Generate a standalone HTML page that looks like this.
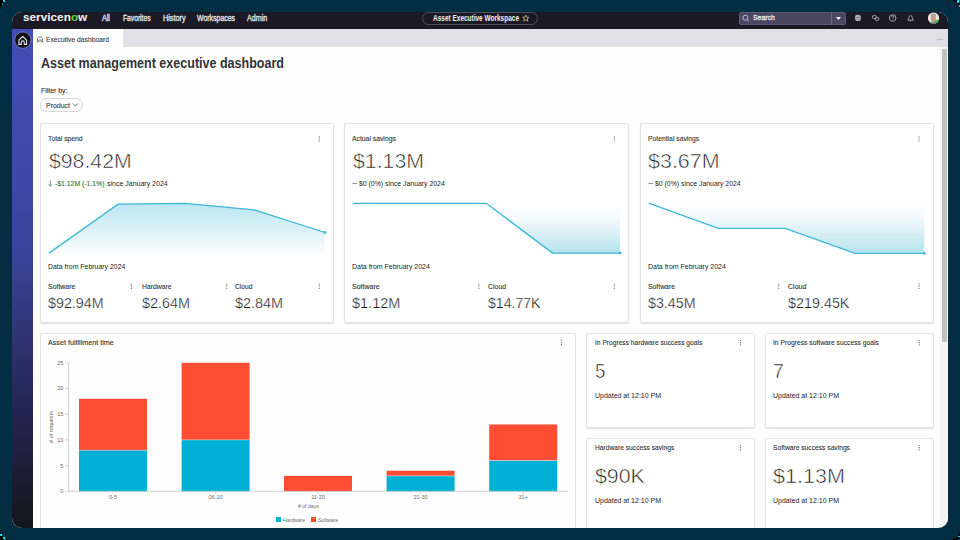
<!DOCTYPE html>
<html><head><meta charset="utf-8"><style>
html,body{margin:0;padding:0;}
body{width:960px;height:540px;overflow:hidden;background:#000;position:relative;font-family:"Liberation Sans", sans-serif;}
#bg{position:absolute;left:0;top:0;width:960px;height:540px;background:#032d43;border-radius:10px;}
.px{position:absolute;width:1.5px;height:1.5px;background:#00e5e5;}
.t{position:absolute;white-space:nowrap;line-height:1;transform-origin:0 0;}
</style></head><body>
<div id="bg"></div>
<div class="px" style="left:3px;top:0"></div><div class="px" style="left:1.5px;top:3px;background:#0a8a88"></div>
<div class="px" style="left:0;top:534px;width:2px"></div><div class="px" style="left:3px;top:537px"></div><div class="px" style="left:4px;top:539px;background:#0a9a98"></div>
<div class="px" style="left:957px;top:0;height:2.5px"></div><div class="px" style="left:958.5px;top:0;background:#1020e0"></div><div class="px" style="left:958.5px;top:5px"></div>
<div class="px" style="left:958px;top:536px;width:2px;height:1px"></div><div class="px" style="left:959px;top:539px;background:#1020e0"></div>
<div style="position:absolute;left:12px;top:12px;width:936px;height:516px;border-radius:10px;overflow:hidden;background:#fefefe;"><div style="position:absolute;left:-12px;top:-12px;width:960px;height:540px;">
<div style="position:absolute;left:12px;top:12px;width:936px;height:17px;background:#1a1924;"></div>
<div style="position:absolute;left:12px;top:29px;width:21px;height:499px;background:linear-gradient(to bottom,#444db5 0%,#424bb0 11.2%,#3b449a 44.3%,#303577 60.3%,#242756 74.3%,#1d1f3c 86.4%,#151821 96.4%,#141720 100%);"></div>
<div style="position:absolute;left:123px;top:29px;width:825px;height:18px;background:#e1e0e6;"></div>
<div style="position:absolute;left:940px;top:47px;width:8px;height:481px;background:#f4f4f4;"></div>
<div style="position:absolute;left:942.4px;top:49px;width:4.2px;height:293px;background:#bec3c1;border-radius:1px;"></div>
<div class="t" style="left:22.90px;top:12px;font-size:11px;color:#f4f4f4;font-weight:700;transform:scaleX(1.0726);">servicen<span style="color:#5fd34a">o</span>w</div>
<div class="t" style="left:102.10px;top:14px;font-size:8.5px;color:#ececf0;font-weight:400;-webkit-text-stroke:0.3px #ececf0;transform:scaleX(0.8373);">All</div>
<div class="t" style="left:122.80px;top:14px;font-size:8.5px;color:#ececf0;font-weight:400;-webkit-text-stroke:0.3px #ececf0;transform:scaleX(0.7872);">Favorites</div>
<div class="t" style="left:162.50px;top:14px;font-size:8.5px;color:#ececf0;font-weight:400;-webkit-text-stroke:0.3px #ececf0;transform:scaleX(0.8511);">History</div>
<div class="t" style="left:197.20px;top:14px;font-size:8.5px;color:#ececf0;font-weight:400;-webkit-text-stroke:0.3px #ececf0;transform:scaleX(0.8172);">Workspaces</div>
<div class="t" style="left:247.00px;top:14px;font-size:8.5px;color:#ececf0;font-weight:400;-webkit-text-stroke:0.3px #ececf0;transform:scaleX(0.8383);">Admin</div>
<div style="position:absolute;left:422px;top:12.2px;width:116px;height:12.6px;border:1px solid #4f4d58;border-radius:7px;box-sizing:border-box;"></div>
<div class="t" style="left:433.00px;top:14px;font-size:8.5px;color:#f4f4f6;font-weight:700;transform:scaleX(0.7627);">Asset Executive Workspace</div>
<div style="position:absolute;left:739px;top:12.2px;width:107px;height:12.5px;background:#4a4560;border:1px solid #5e5a72;border-radius:2px;box-sizing:border-box;"></div>
<div style="position:absolute;left:831px;top:12.2px;width:1px;height:12.5px;background:#6a6680;"></div>
<div class="t" style="left:753.20px;top:14px;font-size:7.2px;color:#ece9f2;font-weight:400;-webkit-text-stroke:0.3px #ece9f2;transform:scaleX(0.9551);">Search</div>
<svg style="position:absolute;left:0;top:0" width="960" height="540" viewBox="0 0 960 540"><circle cx="745.4" cy="17.7" r="2.5" fill="none" stroke="#cfcbe0" stroke-width="0.9"/><line x1="747.2" y1="19.6" x2="749" y2="21.4" stroke="#cfcbe0" stroke-width="0.9"/><polygon points="836,17 841,17 838.5,20" fill="#ffffff"/><polygon points="525.80,15.10 526.68,17.19 528.94,17.38 527.23,18.86 527.74,21.07 525.80,19.90 523.86,21.07 524.37,18.86 522.66,17.38 524.92,17.19" fill="none" stroke="#c9b37a" stroke-width="0.9" stroke-linejoin="round"/><circle cx="857.9" cy="17.9" r="3.1" fill="#bdbac6"/><line x1="854.8" y1="17.9" x2="861" y2="17.9" stroke="#55525e" stroke-width="0.7"/><line x1="855.3" y1="16.3" x2="860.5" y2="16.3" stroke="#8a8794" stroke-width="0.5"/><line x1="855.3" y1="19.5" x2="860.5" y2="19.5" stroke="#8a8794" stroke-width="0.5"/><ellipse cx="874.4" cy="17" rx="2.1" ry="1.6" fill="none" stroke="#bdbac6" stroke-width="0.8"/><ellipse cx="877" cy="19" rx="2" ry="1.5" fill="none" stroke="#bdbac6" stroke-width="0.8"/><circle cx="892.7" cy="18" r="3.3" fill="none" stroke="#bdbac6" stroke-width="0.85"/><path d="M891.6 16.6 Q892.7 15.4 893.7 16.4 Q894.3 17.3 893 18.3 L892.9 19" fill="none" stroke="#bdbac6" stroke-width="0.8"/><path d="M907.7 20.2 Q908.9 19.4 908.9 17.6 Q908.9 15.6 910.6 15.6 Q912.3 15.6 912.3 17.6 Q912.3 19.4 913.5 20.2 Z" fill="none" stroke="#bdbac6" stroke-width="0.8" stroke-linejoin="round"/><path d="M909.9 20.6 Q910.6 21.6 911.3 20.6" fill="none" stroke="#bdbac6" stroke-width="0.7"/><circle cx="933.5" cy="18" r="5.6" fill="#ece8e6"/><ellipse cx="933.4" cy="18.6" rx="2.6" ry="3.4" fill="#c89a86"/><path d="M930.6 16.4 Q933.4 13.2 936.2 16.4 L936 15 Q933.4 12.6 930.8 15 Z" fill="#8a7a6e"/><path d="M929.5 22.5 Q933.4 20.8 937.3 22.5 L936 23.4 L931 23.4 Z" fill="#7a8a98"/><circle cx="936.6" cy="21.3" r="1.7" fill="#47b84a"/><circle cx="22.8" cy="40.1" r="8.2" fill="#111116" stroke="#7d7ac8" stroke-width="0.9"/><path d="M18.9 44.4 L18.9 40.1 L22.75 36.5 L26.6 40.1 L26.6 44.4 L24.3 44.4 L24.3 42.4 Q24.3 40.9 22.75 40.9 Q21.2 40.9 21.2 42.4 L21.2 44.4 Z" fill="none" stroke="#e2e2ea" stroke-width="1.1" stroke-linejoin="round"/><path d="M37.4 42 L37.4 38.7 L40 36.3 L42.6 38.7 L42.6 42 L41.2 42 L41.2 40.8 Q41.2 39.8 40 39.8 Q38.8 39.8 38.8 40.8 L38.8 42 Z" fill="none" stroke="#6a6a6a" stroke-width="0.9" stroke-linejoin="round"/><circle cx="937.9" cy="39.2" r="0.55" fill="#888"/><circle cx="940.1" cy="39.2" r="0.55" fill="#888"/><circle cx="942.3" cy="39.2" r="0.55" fill="#888"/><polyline points="72.9,103.5 75.4,106.1 77.9,103.5" fill="none" stroke="#555" stroke-width="0.9"/></svg>
<div class="t" style="left:45.70px;top:36px;font-size:7px;color:#3a3a3a;font-weight:400;-webkit-text-stroke:0.1px #3a3a3a;transform:scaleX(0.9636);">Executive dashboard</div>
<div class="t" style="left:40.70px;top:56px;font-size:14px;color:#333335;font-weight:700;transform:scaleX(0.8949);">Asset management executive dashboard</div>
<div class="t" style="left:40.70px;top:87px;font-size:7.3px;color:#2b2b2e;font-weight:400;-webkit-text-stroke:0.1px #2b2b2e;transform:scaleX(0.9394);">Filter by:</div>
<div style="position:absolute;left:40.3px;top:97.6px;width:42.5px;height:14.1px;border:1px solid #d6d6d8;border-radius:8px;box-sizing:border-box;"></div>
<div class="t" style="left:45.80px;top:102px;font-size:7.6px;color:#333;font-weight:400;-webkit-text-stroke:0.1px #333;transform:scaleX(0.9167);">Product</div>
<div style="position:absolute;left:40px;top:123px;width:294px;height:200px;background:#fff;border:1px solid #e3e3e3;box-shadow:0 1px 1.5px rgba(0,0,0,.12);box-sizing:border-box;border-radius:2px;"></div>
<div style="position:absolute;left:344px;top:123px;width:285px;height:200px;background:#fff;border:1px solid #e3e3e3;box-shadow:0 1px 1.5px rgba(0,0,0,.12);box-sizing:border-box;border-radius:2px;"></div>
<div style="position:absolute;left:640px;top:123px;width:294px;height:200px;background:#fff;border:1px solid #e3e3e3;box-shadow:0 1px 1.5px rgba(0,0,0,.12);box-sizing:border-box;border-radius:2px;"></div>
<div class="t" style="left:48.00px;top:136px;font-size:6.6px;color:#333;font-weight:400;-webkit-text-stroke:0.1px #333;transform:scaleX(1.0249);">Total spend</div>
<div class="t" style="left:49.00px;top:150px;font-size:21px;color:#1c1c1c;font-weight:400;-webkit-text-stroke:0.55px #fff;transform:scaleX(1.0111);">$98.42M</div>
<div class="t" style="left:54.50px;top:181px;font-size:6.8px;color:#2f7a3a;font-weight:400;-webkit-text-stroke:0.1px #2f7a3a;transform:scaleX(1.0075);">-$1.12M (-1.1%)</div>
<div class="t" style="left:106.50px;top:181px;font-size:6.8px;color:#1c1c1c;font-weight:400;transform:scaleX(1.0290);">since January 2024</div>
<div class="t" style="left:47.80px;top:263px;font-size:7.6px;color:#1c1c1c;font-weight:400;transform:scaleX(0.9117);">Data from February 2024</div>
<div class="t" style="left:47.80px;top:284px;font-size:7.1px;color:#333;font-weight:400;-webkit-text-stroke:0.1px #333;transform:scaleX(0.9782);">Software</div>
<div class="t" style="left:47.80px;top:296px;font-size:14px;color:#1c1c1c;font-weight:400;-webkit-text-stroke:0.25px #fff;transform:scaleX(1.0209);">$92.94M</div>
<div class="t" style="left:142.30px;top:284px;font-size:7.1px;color:#333;font-weight:400;-webkit-text-stroke:0.1px #333;transform:scaleX(0.9585);">Hardware</div>
<div class="t" style="left:142.30px;top:296px;font-size:14px;color:#1c1c1c;font-weight:400;-webkit-text-stroke:0.25px #fff;transform:scaleX(1.0281);">$2.64M</div>
<div class="t" style="left:235.30px;top:284px;font-size:7.1px;color:#333;font-weight:400;-webkit-text-stroke:0.1px #333;transform:scaleX(0.9426);">Cloud</div>
<div class="t" style="left:235.30px;top:296px;font-size:14px;color:#1c1c1c;font-weight:400;-webkit-text-stroke:0.25px #fff;transform:scaleX(1.0302);">$2.84M</div>
<div class="t" style="left:351.70px;top:136px;font-size:6.6px;color:#333;font-weight:400;-webkit-text-stroke:0.1px #333;transform:scaleX(1.0312);">Actual savings</div>
<div class="t" style="left:352.80px;top:150px;font-size:21px;color:#1c1c1c;font-weight:400;-webkit-text-stroke:0.55px #fff;transform:scaleX(1.0124);">$1.13M</div>
<div class="t" style="left:358.50px;top:181px;font-size:6.8px;color:#1c1c1c;font-weight:400;transform:scaleX(1.0135);">$0 (0%) since January 2024</div>
<div class="t" style="left:352.00px;top:263px;font-size:7.6px;color:#1c1c1c;font-weight:400;transform:scaleX(0.9176);">Data from February 2024</div>
<div class="t" style="left:352.00px;top:284px;font-size:7.1px;color:#333;font-weight:400;-webkit-text-stroke:0.1px #333;transform:scaleX(0.9890);">Software</div>
<div class="t" style="left:352.00px;top:296px;font-size:14px;color:#1c1c1c;font-weight:400;-webkit-text-stroke:0.25px #fff;transform:scaleX(1.0345);">$1.12M</div>
<div class="t" style="left:487.90px;top:284px;font-size:7.1px;color:#333;font-weight:400;-webkit-text-stroke:0.1px #333;transform:scaleX(0.9749);">Cloud</div>
<div class="t" style="left:487.90px;top:296px;font-size:14px;color:#1c1c1c;font-weight:400;-webkit-text-stroke:0.25px #fff;transform:scaleX(1.0067);">$14.77K</div>
<div class="t" style="left:647.70px;top:136px;font-size:6.6px;color:#333;font-weight:400;-webkit-text-stroke:0.1px #333;transform:scaleX(1.0281);">Potential savings</div>
<div class="t" style="left:648.00px;top:150px;font-size:21px;color:#1c1c1c;font-weight:400;-webkit-text-stroke:0.55px #fff;transform:scaleX(1.0223);">$3.67M</div>
<div class="t" style="left:654.50px;top:181px;font-size:6.8px;color:#1c1c1c;font-weight:400;transform:scaleX(1.0123);">$0 (0%) since January 2024</div>
<div class="t" style="left:648.00px;top:263px;font-size:7.6px;color:#1c1c1c;font-weight:400;transform:scaleX(0.9176);">Data from February 2024</div>
<div class="t" style="left:648.00px;top:284px;font-size:7.1px;color:#333;font-weight:400;-webkit-text-stroke:0.1px #333;transform:scaleX(0.9640);">Software</div>
<div class="t" style="left:648.00px;top:296px;font-size:14px;color:#1c1c1c;font-weight:400;-webkit-text-stroke:0.25px #fff;transform:scaleX(1.0173);">$3.45M</div>
<div class="t" style="left:787.60px;top:284px;font-size:7.1px;color:#333;font-weight:400;-webkit-text-stroke:0.1px #333;transform:scaleX(0.9910);">Cloud</div>
<div class="t" style="left:787.60px;top:296px;font-size:14px;color:#1c1c1c;font-weight:400;-webkit-text-stroke:0.25px #fff;transform:scaleX(1.0247);">$219.45K</div>
<svg style="position:absolute;left:0;top:0" width="960" height="540" viewBox="0 0 960 540"><defs><linearGradient id="g1" x1="0" y1="0" x2="0" y2="1"><stop offset="0" stop-color="#bce6f1"/><stop offset="0.6" stop-color="#e0f3f8"/><stop offset="1" stop-color="#fdfeff"/></linearGradient><linearGradient id="g2" x1="0" y1="0" x2="0" y2="1"><stop offset="0" stop-color="#ffffff"/><stop offset="0.3" stop-color="#f1f9fc"/><stop offset="1" stop-color="#b6e2ee"/></linearGradient></defs><line x1="50.3" y1="180.6" x2="50.3" y2="186.2" stroke="#2f7a3a" stroke-width="0.7"/><polyline points="48.6,184.3 50.3,186.2 52,184.3" fill="none" stroke="#2f7a3a" stroke-width="0.7"/><line x1="352.3" y1="183.4" x2="357" y2="183.4" stroke="#555" stroke-width="0.7"/><line x1="648.3" y1="183.4" x2="653" y2="183.4" stroke="#555" stroke-width="0.7"/><polygon points="49,253.1 118.1,204.1 184.8,203.3 254.3,209.9 325,232.5 325,254 49,254" fill="url(#g1)"/><polyline points="49,253.1 118.1,204.1 184.8,203.3 254.3,209.9 325,232.5" fill="none" stroke="#3cb7d8" stroke-width="1.3"/><circle cx="325" cy="232.5" r="1.4" fill="#3cb7d8"/><polygon points="486.25,206 552.5,253.1 620.2,253.1 620.2,206" fill="url(#g2)"/><polyline points="353,203.3 486.25,203.3 552.5,253.1 620.2,253.1" fill="none" stroke="#3cb7d8" stroke-width="1.3"/><circle cx="620.2" cy="253.1" r="1.4" fill="#3cb7d8"/><polygon points="648.75,203.1 718.1,228.4 785.3,228.4 855,253.4 924.4,253.4 924.4,206 648.75,206" fill="url(#g2)"/><polyline points="648.75,203.1 718.1,228.4 785.3,228.4 855,253.4 924.4,253.4" fill="none" stroke="#3cb7d8" stroke-width="1.3"/><circle cx="924.4" cy="253.4" r="1.4" fill="#3cb7d8"/><rect x="79.0" y="450.18" width="68" height="41.12" fill="#01b0d5"/><rect x="79.0" y="398.78" width="68" height="51.40" fill="#ff4d33"/><rect x="79.0" y="449.78" width="68" height="0.8" fill="#dff0f2" opacity="0.6"/><rect x="181.6" y="439.90" width="68" height="51.40" fill="#01b0d5"/><rect x="181.6" y="362.80" width="68" height="77.10" fill="#ff4d33"/><rect x="181.6" y="439.50" width="68" height="0.8" fill="#dff0f2" opacity="0.6"/><rect x="284.0" y="475.88" width="68" height="15.42" fill="#ff4d33"/><rect x="386.6" y="475.88" width="68" height="15.42" fill="#01b0d5"/><rect x="386.6" y="470.74" width="68" height="5.14" fill="#ff4d33"/><rect x="386.6" y="475.48" width="68" height="0.8" fill="#dff0f2" opacity="0.6"/><rect x="489.2" y="460.46" width="68" height="30.84" fill="#01b0d5"/><rect x="489.2" y="424.48" width="68" height="35.98" fill="#ff4d33"/><rect x="489.2" y="460.06" width="68" height="0.8" fill="#dff0f2" opacity="0.6"/><line x1="68.4" y1="362.5" x2="68.4" y2="491.3" stroke="#c4c4c4" stroke-width="0.8"/><line x1="68.4" y1="491.3" x2="568" y2="491.3" stroke="#c4c4c4" stroke-width="0.8"/><line x1="65" y1="491.30" x2="68.4" y2="491.30" stroke="#c4c4c4" stroke-width="0.7"/><line x1="65" y1="465.60" x2="68.4" y2="465.60" stroke="#c4c4c4" stroke-width="0.7"/><line x1="65" y1="439.90" x2="68.4" y2="439.90" stroke="#c4c4c4" stroke-width="0.7"/><line x1="65" y1="414.20" x2="68.4" y2="414.20" stroke="#c4c4c4" stroke-width="0.7"/><line x1="65" y1="388.50" x2="68.4" y2="388.50" stroke="#c4c4c4" stroke-width="0.7"/><line x1="65" y1="362.80" x2="68.4" y2="362.80" stroke="#c4c4c4" stroke-width="0.7"/><line x1="113" y1="491.3" x2="113" y2="494.3" stroke="#c4c4c4" stroke-width="0.7"/><line x1="215.6" y1="491.3" x2="215.6" y2="494.3" stroke="#c4c4c4" stroke-width="0.7"/><line x1="318" y1="491.3" x2="318" y2="494.3" stroke="#c4c4c4" stroke-width="0.7"/><line x1="420.6" y1="491.3" x2="420.6" y2="494.3" stroke="#c4c4c4" stroke-width="0.7"/><line x1="523.2" y1="491.3" x2="523.2" y2="494.3" stroke="#c4c4c4" stroke-width="0.7"/></svg>
<div style="position:absolute;left:40px;top:333px;width:536px;height:220px;border:1px solid #e3e3e3;box-sizing:border-box;border-radius:2px;"></div>
<div class="t" style="left:47.70px;top:339px;font-size:7px;color:#333;font-weight:400;-webkit-text-stroke:0.1px #333;transform:scaleX(1.0251);">Asset fulfillment time</div>
<div class="t" style="left:43.3px;width:20px;text-align:right;top:489px;font-size:5.5px;color:#6a6a6a;">0</div>
<div class="t" style="left:43.3px;width:20px;text-align:right;top:464px;font-size:5.5px;color:#6a6a6a;">5</div>
<div class="t" style="left:43.3px;width:20px;text-align:right;top:438px;font-size:5.5px;color:#6a6a6a;">10</div>
<div class="t" style="left:43.3px;width:20px;text-align:right;top:412px;font-size:5.5px;color:#6a6a6a;">15</div>
<div class="t" style="left:43.3px;width:20px;text-align:right;top:386px;font-size:5.5px;color:#6a6a6a;">20</div>
<div class="t" style="left:43.3px;width:20px;text-align:right;top:361px;font-size:5.5px;color:#6a6a6a;">25</div>
<div class="t" style="left:93px;width:40px;text-align:center;top:495px;font-size:5.5px;color:#6a6a6a;">0-5</div>
<div class="t" style="left:195.6px;width:40px;text-align:center;top:495px;font-size:5.5px;color:#6a6a6a;">06-10</div>
<div class="t" style="left:298px;width:40px;text-align:center;top:495px;font-size:5.5px;color:#6a6a6a;">11-20</div>
<div class="t" style="left:400.6px;width:40px;text-align:center;top:495px;font-size:5.5px;color:#6a6a6a;">21-30</div>
<div class="t" style="left:503.20000000000005px;width:40px;text-align:center;top:495px;font-size:5.5px;color:#6a6a6a;">31+</div>
<div class="t" style="left:297.70px;top:504px;font-size:5.8px;color:#6a6a6a;font-weight:400;transform:scaleX(0.8833);"># of days</div>
<div class="t" style="left:32px;top:424px;width:40px;height:6px;text-align:center;font-size:5.5px;color:#6a6a6a;transform-origin:20px 3px;transform:rotate(-90deg);">&#35; of requests</div>
<div style="position:absolute;left:275.8px;top:516.8px;width:5px;height:5.7px;background:#01b0d5;"></div>
<div class="t" style="left:283.00px;top:517px;font-size:6px;color:#6a6a6a;font-weight:400;transform:scaleX(0.8458);">Hardware</div>
<div style="position:absolute;left:311px;top:516.8px;width:5px;height:5.7px;background:#ff4d33;"></div>
<div class="t" style="left:317.80px;top:517px;font-size:6px;color:#6a6a6a;font-weight:400;transform:scaleX(0.8492);">Software</div>
<div style="position:absolute;left:586px;top:333px;width:169px;height:95px;background:#fff;border:1px solid #e3e3e3;box-shadow:0 1px 1.5px rgba(0,0,0,.12);box-sizing:border-box;border-radius:2px;"></div>
<div class="t" style="left:594.60px;top:340px;font-size:6.8px;color:#333;font-weight:400;-webkit-text-stroke:0.1px #333;transform:scaleX(0.9789);">In Progress hardware success goals</div>
<div class="t" style="left:594.60px;top:360px;font-size:21px;color:#1c1c1c;font-weight:400;-webkit-text-stroke:0.55px #fff;transform:scaleX(0.8923);">5</div>
<div class="t" style="left:594.60px;top:392px;font-size:7px;color:#1c1c1c;font-weight:400;transform:scaleX(0.9977);">Updated at 12:10 PM</div>
<div style="position:absolute;left:765px;top:333px;width:169px;height:95px;background:#fff;border:1px solid #e3e3e3;box-shadow:0 1px 1.5px rgba(0,0,0,.12);box-sizing:border-box;border-radius:2px;"></div>
<div class="t" style="left:773.00px;top:340px;font-size:6.8px;color:#333;font-weight:400;-webkit-text-stroke:0.1px #333;transform:scaleX(0.9901);">In Progress software success goals</div>
<div class="t" style="left:773.00px;top:360px;font-size:21px;color:#1c1c1c;font-weight:400;-webkit-text-stroke:0.55px #fff;transform:scaleX(0.9266);">7</div>
<div class="t" style="left:773.00px;top:392px;font-size:7px;color:#1c1c1c;font-weight:400;transform:scaleX(0.9977);">Updated at 12:10 PM</div>
<div style="position:absolute;left:586px;top:438px;width:169px;height:122px;background:#fff;border:1px solid #e3e3e3;box-shadow:0 1px 1.5px rgba(0,0,0,.12);box-sizing:border-box;border-radius:2px;"></div>
<div class="t" style="left:594.60px;top:445px;font-size:6.8px;color:#333;font-weight:400;-webkit-text-stroke:0.1px #333;transform:scaleX(0.9816);">Hardware success savings</div>
<div class="t" style="left:594.60px;top:465px;font-size:21px;color:#1c1c1c;font-weight:400;-webkit-text-stroke:0.55px #fff;transform:scaleX(1.0156);">$90K</div>
<div class="t" style="left:594.60px;top:497px;font-size:7px;color:#1c1c1c;font-weight:400;transform:scaleX(0.9977);">Updated at 12:10 PM</div>
<div style="position:absolute;left:765px;top:438px;width:169px;height:122px;background:#fff;border:1px solid #e3e3e3;box-shadow:0 1px 1.5px rgba(0,0,0,.12);box-sizing:border-box;border-radius:2px;"></div>
<div class="t" style="left:773.00px;top:445px;font-size:6.8px;color:#333;font-weight:400;-webkit-text-stroke:0.1px #333;transform:scaleX(0.9842);">Software success savings</div>
<div class="t" style="left:773.00px;top:465px;font-size:21px;color:#1c1c1c;font-weight:400;-webkit-text-stroke:0.55px #fff;transform:scaleX(1.0252);">$1.13M</div>
<div class="t" style="left:773.00px;top:497px;font-size:7px;color:#1c1c1c;font-weight:400;transform:scaleX(0.9977);">Updated at 12:10 PM</div>
<svg style="position:absolute;left:0;top:0" width="960" height="540" viewBox="0 0 960 540"><circle cx="319.2" cy="136.80" r="0.62" fill="#666"/><circle cx="319.2" cy="138.90" r="0.62" fill="#666"/><circle cx="319.2" cy="141.00" r="0.62" fill="#666"/><circle cx="131.4" cy="284.10" r="0.62" fill="#666"/><circle cx="131.4" cy="286.20" r="0.62" fill="#666"/><circle cx="131.4" cy="288.30" r="0.62" fill="#666"/><circle cx="226.7" cy="284.10" r="0.62" fill="#666"/><circle cx="226.7" cy="286.20" r="0.62" fill="#666"/><circle cx="226.7" cy="288.30" r="0.62" fill="#666"/><circle cx="319.2" cy="284.10" r="0.62" fill="#666"/><circle cx="319.2" cy="286.20" r="0.62" fill="#666"/><circle cx="319.2" cy="288.30" r="0.62" fill="#666"/><circle cx="614.3" cy="136.80" r="0.62" fill="#666"/><circle cx="614.3" cy="138.90" r="0.62" fill="#666"/><circle cx="614.3" cy="141.00" r="0.62" fill="#666"/><circle cx="478.9" cy="284.10" r="0.62" fill="#666"/><circle cx="478.9" cy="286.20" r="0.62" fill="#666"/><circle cx="478.9" cy="288.30" r="0.62" fill="#666"/><circle cx="614.3" cy="284.10" r="0.62" fill="#666"/><circle cx="614.3" cy="286.20" r="0.62" fill="#666"/><circle cx="614.3" cy="288.30" r="0.62" fill="#666"/><circle cx="919" cy="136.80" r="0.62" fill="#666"/><circle cx="919" cy="138.90" r="0.62" fill="#666"/><circle cx="919" cy="141.00" r="0.62" fill="#666"/><circle cx="778.7" cy="284.10" r="0.62" fill="#666"/><circle cx="778.7" cy="286.20" r="0.62" fill="#666"/><circle cx="778.7" cy="288.30" r="0.62" fill="#666"/><circle cx="919" cy="284.10" r="0.62" fill="#666"/><circle cx="919" cy="286.20" r="0.62" fill="#666"/><circle cx="919" cy="288.30" r="0.62" fill="#666"/><circle cx="561.5" cy="340.20" r="0.62" fill="#666"/><circle cx="561.5" cy="342.30" r="0.62" fill="#666"/><circle cx="561.5" cy="344.40" r="0.62" fill="#666"/><circle cx="740.4" cy="340.60" r="0.62" fill="#666"/><circle cx="740.4" cy="342.70" r="0.62" fill="#666"/><circle cx="740.4" cy="344.80" r="0.62" fill="#666"/><circle cx="919.2" cy="340.60" r="0.62" fill="#666"/><circle cx="919.2" cy="342.70" r="0.62" fill="#666"/><circle cx="919.2" cy="344.80" r="0.62" fill="#666"/><circle cx="740.4" cy="445.60" r="0.62" fill="#666"/><circle cx="740.4" cy="447.70" r="0.62" fill="#666"/><circle cx="740.4" cy="449.80" r="0.62" fill="#666"/><circle cx="919.2" cy="445.60" r="0.62" fill="#666"/><circle cx="919.2" cy="447.70" r="0.62" fill="#666"/><circle cx="919.2" cy="449.80" r="0.62" fill="#666"/></svg>
</div></div>
</body></html>
